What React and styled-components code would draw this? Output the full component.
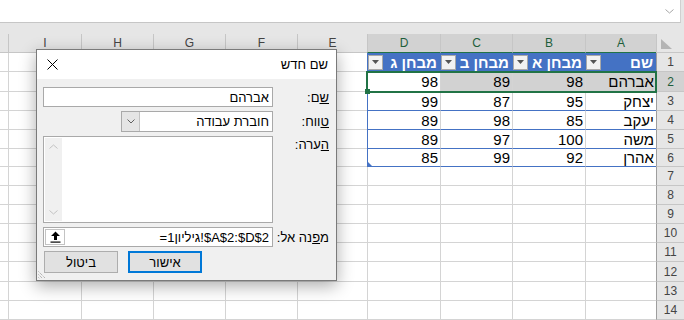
import styled, { createGlobalStyle } from "styled-components";

const GlobalStyle = createGlobalStyle`
  html, body {
    margin: 0;
    padding: 0;
    background: #fff;
  }
  body {
    font-family: "Liberation Sans", Arial, sans-serif;
  }
`;

const columns = [
  { key: "J", w: 8 },
  { key: "I", w: 73 },
  { key: "H", w: 72 },
  { key: "G", w: 72 },
  { key: "F", w: 72 },
  { key: "E", w: 70 },
  { key: "D", w: 73 },
  { key: "C", w: 72 },
  { key: "B", w: 73 },
  { key: "A", w: 71 },
];
const rowHeights = [19, 20, 19, 19, 19, 18, 19, 19, 19, 19, 19, 20, 19, 19];
const tableCols = ["A", "B", "C", "D"];
const headers = { A: "שם", B: "מבחן א", C: "מבחן ב", D: "מבחן ג" };
const data = {
  2: { A: "אברהם", B: 98, C: 89, D: 98 },
  3: { A: "יצחק", B: 95, C: 87, D: 99 },
  4: { A: "יעקב", B: 85, C: 98, D: 89 },
  5: { A: "משה", B: 100, C: 97, D: 89 },
  6: { A: "אהרן", B: 92, C: 99, D: 85 },
};

const Page = styled.div`
  position: relative;
  width: 684px;
  height: 320px;
  overflow: hidden;
  background: #e6e6e6;
`;

const FormulaBar = styled.div`
  box-sizing: border-box;
  width: 681px;
  height: 23px;
  background: #fff;
  border-bottom: 1px solid #c6c6c6;
  border-right: 1px solid #d0d0d0;
  display: flex;
  justify-content: flex-end;
  align-items: center;
  padding-right: 6px;
  margin-bottom: 11px;
`;

const Sheet = styled.div`
  display: grid;
  grid-template-columns: ${columns.map((c) => c.w + "px").join(" ")} 28px;
  grid-template-rows: 19px ${rowHeights.map((h) => h + "px").join(" ")};
  background: #fff;
`;

const ColHead = styled.div`
  box-sizing: border-box;
  background: ${(p) => (p.$sel ? "#d2d2d2" : "#e6e6e6")};
  border-left: ${(p) => (p.$first ? "none" : "1px solid #c6c6c6")};
  border-bottom: 1px solid ${(p) => (p.$sel ? "#217346" : "#c6c6c6")};
  color: ${(p) => (p.$sel ? "#1e5e3b" : "#444")};
  font-size: 12px;
  display: flex;
  align-items: center;
  justify-content: center;
`;

const Corner = styled.div`
  box-sizing: border-box;
  background: #e6e6e6;
  border-left: 1px solid #c6c6c6;
  border-bottom: 1px solid #c6c6c6;
  display: flex;
  align-items: flex-end;
  padding: 0 0 3px 4px;
`;

const RowHead = styled.div`
  box-sizing: border-box;
  background: ${(p) => (p.$sel ? "#d2d2d2" : "#e6e6e6")};
  border-left: 1px solid #9e9e9e;
  border-bottom: 1px solid #c6c6c6;
  color: ${(p) => (p.$sel ? "#1e5e3b" : "#444")};
  font-size: 12px;
  display: flex;
  align-items: center;
  justify-content: center;
`;

const Cell = styled.div`
  position: relative;
  box-sizing: border-box;
  background: ${(p) => (p.$sel ? "#d2d2d2" : "#fff")};
  border-left: ${(p) =>
    p.$first ? "none" : `1px solid ${p.$edge ? "#4472c4" : "#d4d4d4"}`};
  border-bottom: 1px solid ${(p) => (p.$band ? "#4472c4" : "#d4d4d4")};
  direction: rtl;
  font-size: 15px;
  color: #000;
  display: flex;
  align-items: center;
  padding: 0 2px;
  white-space: nowrap;
`;

const HeadCell = styled.div`
  box-sizing: border-box;
  background: #4472c4;
  border-left: 1px solid #4472c4;
  border-bottom: 1px solid #4472c4;
  direction: rtl;
  display: flex;
  align-items: center;
  justify-content: space-between;
  padding: 0 3px 0 0;
  color: #fff;
  font-weight: bold;
  font-size: 15px;
  white-space: nowrap;
`;

const FilterButton = styled.div`
  box-sizing: border-box;
  width: 15px;
  height: 15px;
  background: #f2f2f2;
  border: 1px solid #a9a9a9;
  display: flex;
  align-items: center;
  justify-content: center;
`;

const TableGrip = styled.div`
  position: absolute;
  left: 0;
  bottom: 0;
  width: 0;
  height: 0;
  border-bottom: 4px solid #4472c4;
  border-right: 4px solid transparent;
`;

const Selection = styled.div`
  position: absolute;
  left: 366px;
  top: 71px;
  width: 291px;
  height: 22px;
  box-sizing: border-box;
  border: 2px solid #217346;
  pointer-events: none;
`;

const FillHandle = styled.div`
  position: absolute;
  left: 365px;
  top: 89px;
  width: 5px;
  height: 5px;
  background: #217346;
`;

const Dialog = styled.div`
  position: absolute;
  left: 36px;
  top: 49px;
  width: 301px;
  height: 232px;
  box-sizing: border-box;
  border: 1px solid #7a7a7a;
  background: #f0f0f0;
  box-shadow: 0 5px 16px rgba(0, 0, 0, 0.33);
  direction: rtl;
  font-family: "Liberation Sans", Arial, sans-serif;
  font-size: 13px;
  color: #000;
  display: flex;
  flex-direction: column;
`;

const TitleBar = styled.div`
  height: 29px;
  background: #fff;
  display: flex;
  align-items: center;
  justify-content: space-between;
  padding: 0 8px 0 10px;
`;

const FormGrid = styled.div`
  display: grid;
  grid-template-columns: 1fr 230px;
  grid-template-rows: 20px 21px 87px 20px 22px;
  row-gap: 4px;
  padding: 8px 7px 0 6px;
`;

const Label = styled.div`
  display: flex;
  align-items: ${(p) => (p.$top ? "flex-start" : "center")};
  padding-top: ${(p) => (p.$top ? "1px" : "0")};
  white-space: nowrap;
`;

const Key = styled.span`
  text-decoration: underline;
`;

const TextBox = styled.div`
  box-sizing: border-box;
  background: #fff;
  border: 1px solid #a9a9a9;
  display: flex;
  align-items: center;
  padding: 0 3px;
`;

const Select = styled(TextBox)`
  width: 152px;
  justify-self: start;
  padding: 0 3px 0 0;
  justify-content: space-between;
`;

const DropButton = styled.div`
  box-sizing: border-box;
  width: 18px;
  height: 100%;
  background: #e5e5e5;
  border-right: 1px solid #c3c3c3;
  display: flex;
  align-items: center;
  justify-content: center;
`;

const Memo = styled(TextBox)`
  padding: 1px;
  align-items: stretch;
  justify-content: flex-end;
`;

const ScrollBar = styled.div`
  width: 17px;
  background: #f0f0f0;
  display: flex;
  flex-direction: column;
  justify-content: space-between;
  align-items: center;
  padding: 6px 0;
`;

const RefBox = styled(TextBox)`
  padding: 0 0 0 1px;
  justify-content: space-between;
`;

const RefText = styled.span`
  direction: ltr;
  padding-right: 3px;
  white-space: nowrap;
`;

const CollapseButton = styled.div`
  box-sizing: border-box;
  width: 20px;
  height: 16px;
  background: #fff;
  border: 1px solid #c3c3c3;
  display: flex;
  align-items: center;
  justify-content: center;
`;

const ButtonRow = styled.div`
  grid-column: 2;
  display: flex;
  justify-content: flex-end;
  gap: 10px;
  padding-left: 1px;
`;

const Button = styled.div`
  box-sizing: border-box;
  width: 74px;
  height: 22px;
  background: #e1e1e1;
  border: ${(p) => (p.$primary ? "2px solid #0078d7" : "1px solid #adadad")};
  display: flex;
  align-items: center;
  justify-content: center;
`;

const Grip = styled.svg`
  position: absolute;
  left: 1px;
  bottom: 1px;
`;

function Chevron({ up, color, w = 8, h = 5 }) {
  const d = up
    ? `M0.5 ${h - 0.5}L${w / 2} 1L${w - 0.5} ${h - 0.5}`
    : `M0.5 0.5L${w / 2} ${h - 1}L${w - 0.5} 0.5`;
  return (
    <svg width={w} height={h} viewBox={`0 0 ${w} ${h}`}>
      <path d={d} fill="none" stroke={color} strokeWidth="1" />
    </svg>
  );
}

function renderCell(r, col, ci) {
  const k = `${r}-${col}`;
  const first = ci === 0;
  const inTable = tableCols.includes(col);
  if (r === 1 && inTable) {
    return (
      <HeadCell key={k}>
        <span>{headers[col]}</span>
        <FilterButton>
          <svg width="7" height="4" viewBox="0 0 7 4">
            <path d="M0 0H7L3.5 4Z" fill="#555" />
          </svg>
        </FilterButton>
      </HeadCell>
    );
  }
  if (r >= 2 && r <= 6 && inTable) {
    return (
      <Cell
        key={k}
        $band
        $edge={col === "D"}
        $sel={r === 2 && col !== "D"}
      >
        {data[r][col]}
        {r === 6 && col === "D" && <TableGrip />}
      </Cell>
    );
  }
  return <Cell key={k} $first={first} />;
}

export default function App() {
  return (
    <>
      <GlobalStyle />
      <Page>
        <FormulaBar>
          <Chevron color="#a6a6a6" w={9} h={5} />
        </FormulaBar>
        <Sheet>
          {columns.map((c, i) => (
            <ColHead
              key={c.key}
              $first={i === 0}
              $sel={tableCols.includes(c.key)}
            >
              {i === 0 ? "" : c.key}
            </ColHead>
          ))}
          <Corner>
            <svg width="11" height="10" viewBox="0 0 11 10">
              <path d="M0 0V10H11Z" fill="#b4b4b4" />
            </svg>
          </Corner>
          {rowHeights.map((_, ri) => {
            const r = ri + 1;
            return [
              ...columns.map((c, ci) => renderCell(r, c.key, ci)),
              <RowHead key={`rh-${r}`} $sel={r === 2}>
                {r}
              </RowHead>,
            ];
          })}
        </Sheet>
        <Selection />
        <FillHandle />

        <Dialog>
          <TitleBar>
            <span>שם חדש</span>
            <svg width="11" height="11" viewBox="0 0 11 11">
              <path
                d="M0.5 0.5L10.5 10.5M10.5 0.5L0.5 10.5"
                stroke="#000"
                strokeWidth="1"
              />
            </svg>
          </TitleBar>
          <FormGrid>
            <Label>
              <Key>ש</Key>ם:
            </Label>
            <TextBox>אברהם</TextBox>

            <Label>
              <Key>ט</Key>ווח:
            </Label>
            <Select>
              <span>חוברת עבודה</span>
              <DropButton>
                <Chevron color="#606060" />
              </DropButton>
            </Select>

            <Label $top>
              <Key>ה</Key>ערה:
            </Label>
            <Memo>
              <ScrollBar>
                <Chevron up color="#c2c2c2" w={9} h={5} />
                <Chevron color="#c2c2c2" w={9} h={5} />
              </ScrollBar>
            </Memo>

            <Label>
              מ<Key>פ</Key>נה אל:
            </Label>
            <RefBox>
              <RefText dir="ltr">{"=גיליון1!$A$2:$D$2"}</RefText>
              <CollapseButton>
                <svg width="11" height="12" viewBox="0 0 11 12">
                  <path d="M5.5 0.5L10 5H7V9H4V5H1Z" fill="#000" />
                  <rect x="0.5" y="10.5" width="10" height="1.2" fill="#000" />
                </svg>
              </CollapseButton>
            </RefBox>

            <ButtonRow>
              <Button $primary>אישור</Button>
              <Button>ביטול</Button>
            </ButtonRow>
          </FormGrid>
          <Grip width="9" height="9" viewBox="0 0 9 9">
            <path
              d="M0.5 1.5L7.5 8.5M0.5 4.5L4.5 8.5M0.5 7.5L1.5 8.5"
              stroke="#9a9a9a"
              strokeWidth="1"
              strokeDasharray="1 1"
            />
          </Grip>
        </Dialog>
      </Page>
    </>
  );
}
